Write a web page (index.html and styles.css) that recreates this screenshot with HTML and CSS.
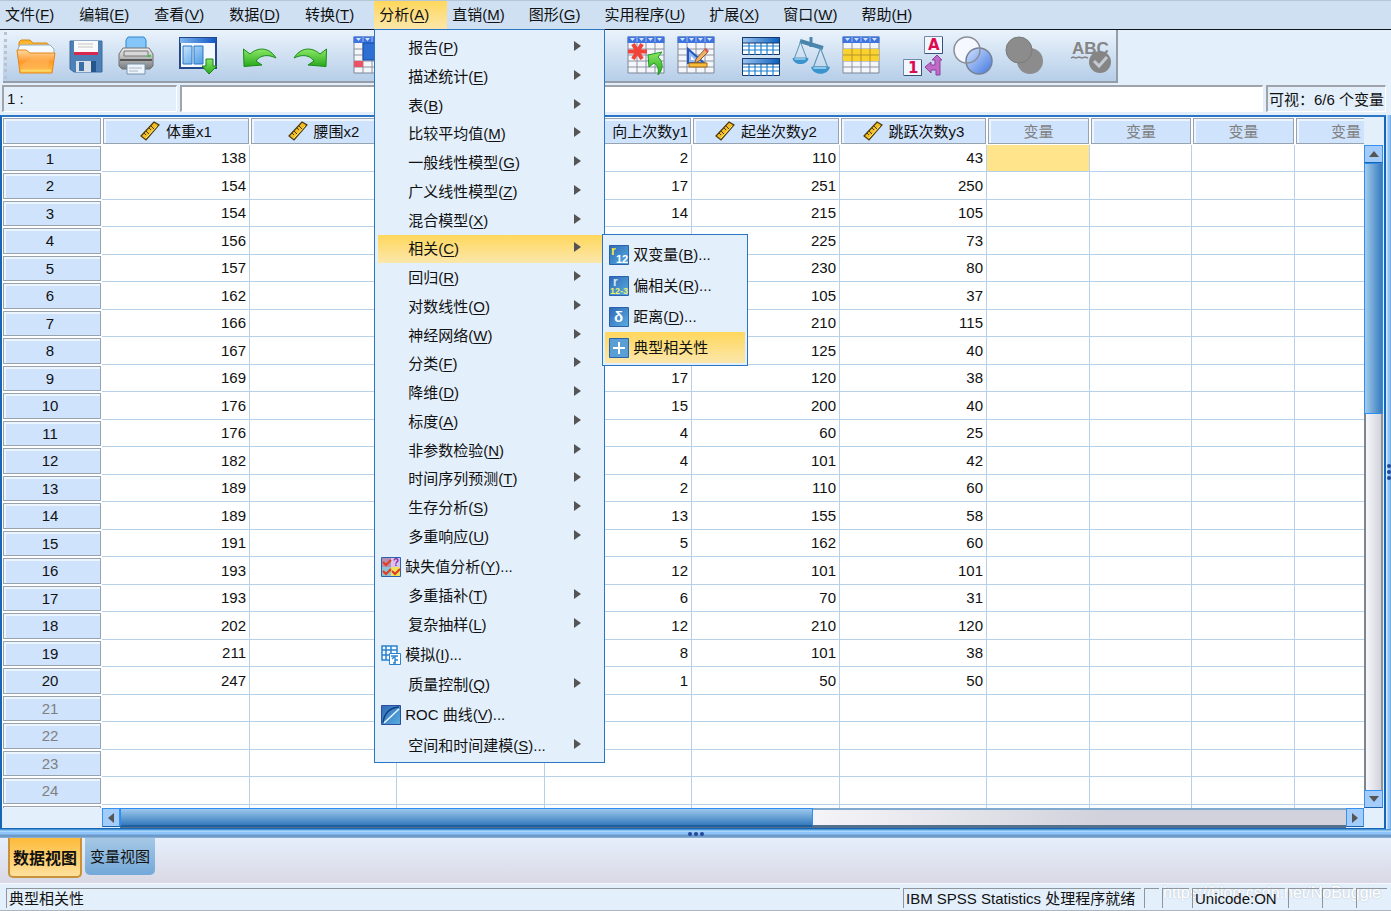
FILE: index.html
```html
<!DOCTYPE html>
<html lang="zh-CN">
<head>
<meta charset="utf-8">
<title>IBM SPSS Statistics</title>
<link rel="stylesheet" href="styles.css">
</head>
<body>
<svg class="defs" aria-hidden="true">
  <defs>
    <linearGradient id="blue" x1="0" y1="0" x2="1" y2="0"><stop offset="0" stop-color="#7db5ee"/><stop offset="1" stop-color="#1457c4"/></linearGradient>
    <linearGradient id="navy" x1="0" y1="0" x2="1" y2="0"><stop offset="0" stop-color="#9cc4ee"/><stop offset="1" stop-color="#0b5fc0"/></linearGradient>
    <linearGradient id="sky" x1="0" y1="0" x2="1" y2="1"><stop offset="0" stop-color="#c8e6fb"/><stop offset="1" stop-color="#4d9be6"/></linearGradient>
    <linearGradient id="tile" x1="0" y1="0" x2="1" y2="1"><stop offset="0" stop-color="#2f68b8"/><stop offset="1" stop-color="#59aee0"/></linearGradient>
    <linearGradient id="orange" x1="0" y1="0" x2="0" y2="1"><stop offset="0" stop-color="#ffd9a0"/><stop offset=".5" stop-color="#ff9a2e"/><stop offset="1" stop-color="#ffc23c"/></linearGradient>
    <linearGradient id="green" x1="0" y1="0" x2="0" y2="1"><stop offset="0" stop-color="#8be866"/><stop offset="1" stop-color="#27a81c"/></linearGradient>
    <linearGradient id="steel" x1="0" y1="0" x2="0" y2="1"><stop offset="0" stop-color="#f2f2f2"/><stop offset="1" stop-color="#77797c"/></linearGradient>
    <linearGradient id="ball" x1="0" y1="0" x2="1" y2="1"><stop offset="0" stop-color="#d5e3ff"/><stop offset="1" stop-color="#3f77e0"/></linearGradient>
    <symbol id="ruler" viewBox="0 0 20 20">
      <path d="M1 15 14 1l5 3L6 19z" fill="#f3bd22" stroke="#4a3a10" stroke-width="1.200"/>
      <path d="m4 12 2 2m0-4 3 3m0-6 2 2m0-4 3 3" stroke="#4a3a10" fill="none"/>
      <path d="m6 17 11-12" stroke="#ffe77a"/>
    </symbol>
    <symbol id="sheet" viewBox="0 0 40 40">
      <path d="M2 1h36v36H2z" fill="#f4f6fa" stroke="#7c8799"/>
      <path d="M2 13h36M2 19h36M2 25h36M2 31h36M11 6v31M20 6v31M29 6v31" stroke="#8a92a0" fill="none"/>
      <path d="M1.500.5h37V7h-37z" fill="#3f74de"/>
      <path d="M4 2h5L6.500 5zM13 2h5l-2.500 3zM22 2h5l-2.500 3zM31 2h5l-2.500 3z" fill="#d7e6ff"/>
      <path d="M11 1v5M20 1v5M29 1v5" stroke="#9dbcf2"/>
    </symbol>
    <symbol id="undo" viewBox="0 0 40 40">
      <path d="M3.500 13 4 30.500l18-1.500-6-4c4-6 12-7 20-3C30 12 19 10 10 18z" fill="url(#green)" stroke="#178b1b"/>
    </symbol>
    <symbol id="pan" viewBox="0 0 16 24">
      <path d="M8 1 2 17h12z" fill="none" stroke="#5a93b4"/>
      <path d="M0 17h16c-1 8-15 8-16 0z" fill="#3a93cf"/><path d="M2 18h11" stroke="#c9efff"/>
    </symbol>
    <symbol id="minitable" viewBox="0 0 38 18">
      <path d="M.5.5h37v17H.5z" fill="#fff" stroke="#15396f"/>
      <path d="M1 9h36M1 13h36M7 6v12M13 6v12M19 6v12M25 6v12M31 6v12" stroke="#1b7fd0" stroke-width="1.200"/>
      <path d="M.5.5h37V6H.5z" fill="url(#navy)" stroke="#15396f"/>
    </symbol>
  </defs>
</svg>

<nav class="menubar">
  <button>文件(<u>F</u>)</button>
  <button>编辑(<u>E</u>)</button>
  <button>查看(<u>V</u>)</button>
  <button>数据(<u>D</u>)</button>
  <button>转换(<u>T</u>)</button>
  <div class="menu-holder">
    <button class="open">分析(<u>A</u>)</button>
    <ul class="menu">
      <li><button class="more">报告(<u>P</u>)</button></li>
      <li><button class="more">描述统计(<u>E</u>)</button></li>
      <li><button class="more">表(<u>B</u>)</button></li>
      <li><button class="more">比较平均值(<u>M</u>)</button></li>
      <li><button class="more">一般线性模型(<u>G</u>)</button></li>
      <li><button class="more">广义线性模型(<u>Z</u>)</button></li>
      <li><button class="more">混合模型(<u>X</u>)</button></li>
      <li><button class="more lit">相关(<u>C</u>)</button>
        <ul class="submenu">
          <li><button><svg viewBox="0 0 20 20"><path d="M.5.5h19v19H.5z" fill="url(#tile)" stroke="#2c62ad"/><text x="2" y="10" class="t-r yellow">r</text><text x="7" y="18" class="t-num">12</text></svg>双变量(<u>B</u>)...</button></li>
          <li><button><svg viewBox="0 0 20 20"><path d="M.5.5h19v19H.5z" fill="url(#tile)" stroke="#2c62ad"/><text x="4" y="10" class="t-r">r</text><text x="1" y="18" class="t-small">12-3</text></svg>偏相关(<u>R</u>)...</button></li>
          <li><button><svg viewBox="0 0 20 20"><path d="M.5.5h19v19H.5z" fill="url(#tile)" stroke="#2c62ad"/><text x="5" y="15" class="t-delta">δ</text></svg>距离(<u>D</u>)...</button></li>
          <li><button class="lit"><svg viewBox="0 0 20 20"><path d="M.5.5h19v19H.5z" fill="#5a9ed6" stroke="#2c62ad"/><path d="M4 10h12M10 4v12" stroke="#fff" stroke-width="2"/></svg>典型相关性</button></li>
        </ul>
      </li>
      <li><button class="more">回归(<u>R</u>)</button></li>
      <li><button class="more">对数线性(<u>O</u>)</button></li>
      <li><button class="more">神经网络(<u>W</u>)</button></li>
      <li><button class="more">分类(<u>F</u>)</button></li>
      <li><button class="more">降维(<u>D</u>)</button></li>
      <li><button class="more">标度(<u>A</u>)</button></li>
      <li><button class="more">非参数检验(<u>N</u>)</button></li>
      <li><button class="more">时间序列预测(<u>T</u>)</button></li>
      <li><button class="more">生存分析(<u>S</u>)</button></li>
      <li><button class="more">多重响应(<u>U</u>)</button></li>
      <li class="pic"><button><svg viewBox="0 0 20 20"><path d="M.5.5h19v19H.5z" fill="#e8a45c" stroke="#2c62ad"/><path d="M1 1h9v9H1z" fill="#b58fb0"/><path d="M10 1h9v9h-9z" fill="#d8c4ee"/><path d="M1 10h9v9H1z" fill="#8ec1d6"/><path d="M10 10h9v9h-9z" fill="#efe25a"/><path d="m2 5 3 3 5-5M2 14l3 3 5-5m1 2 3 3 5-5" fill="none" stroke="#e23a1c" stroke-width="2"/><text x="12" y="9" class="t-q">?</text></svg>缺失值分析(<u>Y</u>)...</button></li>
      <li><button class="more">多重插补(<u>T</u>)</button></li>
      <li><button class="more">复杂抽样(<u>L</u>)</button></li>
      <li class="pic"><button><svg viewBox="0 0 20 20"><path d="M1 1h15v14H1zM1 5h15M1 10h15M5 1v14M10 1v14" fill="#f4faff" stroke="#2b83cf" stroke-width="1.500"/><path d="M8.500 8.500h11v11h-11z" fill="#fff" stroke="#2b83cf"/><path d="M10 11h7m-6 3 2-2m1-1v7m-2 0h3m-1-3h3" stroke="#2b83cf" stroke-width="1.400" fill="none"/></svg>模拟(<u>I</u>)...</button></li>
      <li><button class="more">质量控制(<u>Q</u>)</button></li>
      <li class="pic"><button><svg viewBox="0 0 20 20"><path d="M.5.5h19v19H.5z" fill="url(#tile)" stroke="#2c4f9d"/><path d="M2 18C3 8 8 3 18 2" fill="none" stroke="#123f80" stroke-width="1.500"/><path d="M3 18 18 4" stroke="#e9f6ff" stroke-width="1.500"/></svg>ROC 曲线(<u>V</u>)...</button></li>
      <li class="pic"><button class="more">空间和时间建模(<u>S</u>)...</button></li>
    </ul>
  </div>
  <button>直销(<u>M</u>)</button>
  <button>图形(<u>G</u>)</button>
  <button>实用程序(<u>U</u>)</button>
  <button>扩展(<u>X</u>)</button>
  <button>窗口(<u>W</u>)</button>
  <button>帮助(<u>H</u>)</button>
</nav>

<div class="toolbar-row">
  <div class="toolbar">
    <div class="group">
      <button aria-label="打开"><svg viewBox="0 0 40 40"><path d="M3 10V6l2-2h9l3 3h14l3 3v18H3z" fill="#ffb52c" stroke="#d98a1a"/><path d="M2 13 4 9h30l4 4v9H2z" fill="#f4faff" stroke="#8fb0cf"/><path d="M1 14h9l4 3h25l-3 20H4z" fill="url(#orange)" stroke="#e5851c"/><path d="M5 31c4-8 16-11 29-11l-2 13H6z" fill="#ffb65c" opacity=".6"/><path d="M5 34.500h30" stroke="#ffd86a" stroke-width="2"/></svg></button>
      <button aria-label="保存"><svg viewBox="0 0 40 40"><path d="M4 5h32v31H8l-4-3z" fill="#4c80b7" stroke="#3d6a9d"/><path d="M8 5h24v14H8z" fill="#fafafa"/><path d="M12 8h15M12 11h15" stroke="#c4c4c4"/><path d="M8 16h24v3H8z" fill="#d8284d"/><path d="M10 25h20v11H10z" fill="#d9e0e8"/><path d="M25 25h5v11h-5z" fill="#24558d"/><path d="M13 26h5v9h-5z" fill="#3a6ea8"/></svg></button>
      <button aria-label="打印"><svg viewBox="0 0 40 40"><path d="M10 15V4l2-3h16l2 3v11z" fill="#84c6f9" stroke="#2f87cc"/><path d="M7 12h26l4 6v12l-3 3H6l-3-3V18z" fill="url(#steel)" stroke="#727272"/><path d="M8 15h24v5H8z" fill="#d8d8d8" stroke="#777"/><path d="M4 24h32" stroke="#555" stroke-width="2"/><path d="M31 20h4" stroke="#48c24a" stroke-width="2"/><path d="M11 28h18v10H11z" fill="#eef5fc" stroke="#7492ad"/><path d="M13 32h13M13 35h9" stroke="#a6b5c4"/></svg></button>
    </div>
    <div class="group">
      <button aria-label="调用对话框"><svg viewBox="0 0 40 40"><path d="M2 2h36v30H2z" fill="#f3f9ff" stroke="#24488a" stroke-width="2"/><path d="M2 2h36v5H2z" fill="url(#blue)"/><path d="M5 10h9v18H5zM16 10h9v18h-9z" fill="url(#sky)" stroke="#2b77c5"/><path d="M28 23h7v7h4l-8 8-7-8h4z" fill="url(#green)" stroke="#17811c"/></svg></button>
    </div>
    <div class="group">
      <button aria-label="撤销"><svg><use href="#undo"/></svg></button>
      <button aria-label="重做"><svg class="mirror"><use href="#undo"/></svg></button>
    </div>
    <div class="group">
      <button aria-label="转到个案"><svg viewBox="0 0 40 40"><use href="#sheet"/><path d="M2 25h9v6H2z" fill="#ec5164"/><path d="M11 7h20v17H11z" fill="#2d6fd2" stroke="#1a4da3"/></svg></button>
      <button aria-label="转到变量"><svg><use href="#sheet"/></svg></button>
      <button aria-label="变量"><svg><use href="#sheet"/></svg></button>
    </div>
    <div class="group">
      <button aria-label="运行描述统计"><svg><use href="#sheet"/></svg></button>
      <button aria-label="查找"><svg><use href="#sheet"/></svg></button>
    </div>
    <div class="group">
      <button aria-label="插入个案"><svg viewBox="0 0 40 40"><use href="#sheet"/><path d="m7 8 9 15M16 8 7 23M2 15.500h19" stroke="#f0433a" stroke-width="4"/><path d="m22 19 14-3-4 5c6 5 5 13 0 18 1-6 0-9-4-12l-5 4z" fill="url(#green)" stroke="#1d9a20"/></svg></button>
      <button aria-label="插入变量"><svg viewBox="0 0 40 40"><use href="#sheet"/><path d="M12 13v14h16z" fill="#8fb8f5" stroke="#2456c0" stroke-width="2"/><path d="m15 20 4 4h-4z" fill="#fff"/><path d="m20 23 9-10 3 3-9 9-4 2z" fill="#edb267" stroke="#8e5a2c"/><path d="m28 13 2-1 3 3-2 2z" fill="#d95a58"/><path d="M13 27h18v4H13z" fill="#f7bd3b" stroke="#a86a12"/></svg></button>
    </div>
    <div class="group wide">
      <button aria-label="拆分文件"><svg viewBox="0 0 40 40"><use href="#minitable" x="1" y="1" width="38" height="18"/><use href="#minitable" x="1" y="22" width="38" height="18"/></svg></button>
      <button aria-label="个案加权"><svg viewBox="0 0 40 40"><path d="m9 5 23 7" stroke="#4a86ac" stroke-width="4"/><path d="M20 1v10" stroke="#4a86ac" stroke-width="3"/><use href="#pan" x="1" y="5" width="17" height="24"/><use href="#pan" x="20" y="11" width="19" height="28"/></svg></button>
      <button aria-label="选择个案"><svg viewBox="0 0 40 40"><use href="#sheet"/><path d="M2 13h36v12H2z" fill="#f9d22d"/><path d="M2 19h36M11 13v12M20 13v12M29 13v12" stroke="#b5952d"/></svg></button>
    </div>
    <div class="group">
      <button aria-label="值标签"><svg viewBox="0 0 40 40"><path d="M21.500.5h18v17h-18zM.5 23.500h18v16H.5z" fill="#f1f7ff" stroke="#7388ab"/><path d="M22 17.500h17.500V1M1 39.500h17.500V24" fill="none" stroke="#3d5277"/><text x="25" y="14" class="t-tag">A</text><text x="5" y="37" class="t-tag">1</text><path d="m22 31 6-5v3h4v-5h-3l5-5 5 5h-2v15h-4v-5h-5v3z" fill="#bf6cc9" stroke="#8f3e9c"/></svg></button>
      <button aria-label="使用变量集"><svg viewBox="0 0 40 40"><circle cx="14" cy="14" r="13" fill="#f5f8ff"/><circle cx="26" cy="25" r="13" fill="url(#ball)" stroke="#778194" stroke-width="1.500"/><circle cx="14" cy="14" r="13" fill="none" stroke="#8b8f98" stroke-width="1.500"/></svg></button>
      <button aria-label="显示所有变量"><svg viewBox="0 0 40 40"><circle cx="16" cy="14" r="13" fill="#8c8c8c"/><circle cx="27" cy="25" r="13" fill="#8c8c8c"/><circle cx="16" cy="14" r="13" fill="none" stroke="#7b7b7b"/></svg></button>
    </div>
    <div class="group last">
      <button aria-label="拼写检查"><svg viewBox="0 0 40 40"><text x="1" y="18" class="t-abc">ABC</text><path d="m0 22 2-1 3 1 3-1 3 1 3-1 3 1" fill="none" stroke="#858585" stroke-width="1.500"/><circle cx="29" cy="26" r="11" fill="#858585"/><path d="m23 25 5 5 8-9" fill="none" stroke="#c5cad0" stroke-width="3"/></svg></button>
    </div>
  </div>
</div>

<div class="cellbar">
  <input class="cellname" aria-label="单元格" value="1 :" readonly>
  <input class="cellvalue" aria-label="单元格值">
  <output class="visible">可视：6/6 个变量</output>
</div>

<div class="workspace">
  <main class="editor">
    <div class="grid">
      <table>
        <colgroup><col class="c-head"><col class="c-a"><col class="c-b"><col class="c-a"><col class="c-b"><col class="c-a"><col class="c-b"><col class="c-d"><col class="c-c"><col class="c-d"><col class="c-c"></colgroup>
        <thead>
          <tr><td class="corner"></td>
            <th><span><svg><use href="#ruler"/></svg>体重x1</span></th>
            <th><span><svg><use href="#ruler"/></svg>腰围x2</span></th>
            <th></th>
            <th class="end"><span>向上次数y1</span></th>
            <th><span><svg><use href="#ruler"/></svg>起坐次数y2</span></th>
            <th><span><svg><use href="#ruler"/></svg>跳跃次数y3</span></th>
            <th class="blank">变量</th><th class="blank">变量</th><th class="blank">变量</th><th class="blank">变量</th></tr>
        </thead>
        <tbody>
          <tr><th>1<td>138<td><td><td>2<td>110<td>43<td class="picked"><td><td><td></tr>
          <tr><th>2<td>154<td><td><td>17<td>251<td>250<td><td><td><td></tr>
          <tr><th>3<td>154<td><td><td>14<td>215<td>105<td><td><td><td></tr>
          <tr><th>4<td>156<td><td><td><td>225<td>73<td><td><td><td></tr>
          <tr><th>5<td>157<td><td><td><td>230<td>80<td><td><td><td></tr>
          <tr><th>6<td>162<td><td><td><td>105<td>37<td><td><td><td></tr>
          <tr><th>7<td>166<td><td><td><td>210<td>115<td><td><td><td></tr>
          <tr><th>8<td>167<td><td><td><td>125<td>40<td><td><td><td></tr>
          <tr><th>9<td>169<td><td><td>17<td>120<td>38<td><td><td><td></tr>
          <tr><th>10<td>176<td><td><td>15<td>200<td>40<td><td><td><td></tr>
          <tr><th>11<td>176<td><td><td>4<td>60<td>25<td><td><td><td></tr>
          <tr><th>12<td>182<td><td><td>4<td>101<td>42<td><td><td><td></tr>
          <tr><th>13<td>189<td><td><td>2<td>110<td>60<td><td><td><td></tr>
          <tr><th>14<td>189<td><td><td>13<td>155<td>58<td><td><td><td></tr>
          <tr><th>15<td>191<td><td><td>5<td>162<td>60<td><td><td><td></tr>
          <tr><th>16<td>193<td><td><td>12<td>101<td>101<td><td><td><td></tr>
          <tr><th>17<td>193<td><td><td>6<td>70<td>31<td><td><td><td></tr>
          <tr><th>18<td>202<td><td><td>12<td>210<td>120<td><td><td><td></tr>
          <tr><th>19<td>211<td><td><td>8<td>101<td>38<td><td><td><td></tr>
          <tr><th>20<td>247<td><td><td>1<td>50<td>50<td><td><td><td></tr>
          <tr class="unused"><th>21<td><td><td><td><td><td><td><td><td><td></tr>
          <tr class="unused"><th>22<td><td><td><td><td><td><td><td><td><td></tr>
          <tr class="unused"><th>23<td><td><td><td><td><td><td><td><td><td></tr>
          <tr class="unused"><th>24<td><td><td><td><td><td><td><td><td><td></tr>
          <tr class="unused"><th><td><td><td><td><td><td><td><td><td><td></tr>
        </tbody>
      </table>
    </div>
    <div class="vscroll">
      <button class="arrow up" aria-label="向上滚动"></button>
      <div class="track"><div class="thumb"></div></div>
      <button class="arrow down" aria-label="向下滚动"></button>
    </div>
    <div class="hscroll">
      <button class="arrow left" aria-label="向左滚动"></button>
      <div class="track"><div class="thumb"></div></div>
      <button class="arrow right" aria-label="向右滚动"></button>
    </div>
  </main>
  <div class="side-split"><i></i><i></i><i></i></div>
</div>
<div class="bottom-split"><i></i><i></i><i></i></div>

<div class="tabs">
  <button class="tab active">数据视图</button>
  <button class="tab">变量视图</button>
</div>

<footer class="status">
  <div class="watermark">https://blog.csdn.net/NoBuggie</div>
  <span class="message">典型相关性</span>
  <span class="server">IBM SPSS Statistics 处理程序就绪</span>
  <span class="s-tiny"></span>
  <span class="s-small"></span>
  <span class="unicode">Unicode:ON</span>
  <span class="s-mid"></span>
  <span class="s-mid"></span>
  <span class="s-mid"></span>
</footer>
</body>
</html>
```
FILE: styles.css
```css
* { box-sizing: border-box; }

body {
  margin: 0;
  height: 100vh;
  display: flex;
  flex-direction: column;
  overflow: hidden;
  background: #e3effb;
  color: #111;
  font: 15px/20px "Liberation Sans", "Noto Sans CJK SC", sans-serif;
}

button, input {
  font: inherit;
  color: inherit;
  border: 0;
  padding: 0;
  margin: 0;
  background: none;
  border-radius: 0;
}

ul { list-style: none; margin: 0; padding: 0; }
u { text-underline-offset: 2px; }
.defs { position: absolute; width: 0; height: 0; }

/* Menu bar */
.menubar {
  display: flex;
  height: 30px;
  flex: none;
  background: #cee0f1;
  border-top: 1px solid #b5c6d6;
  border-bottom: 1px solid #10151c;
}
.menubar > button, .menu-holder > button {
  height: 28px;
  padding: 0 20px 0 5px;
  white-space: nowrap;
}
.menu-holder > .open {
  padding-right: 18px;
  background: linear-gradient(#ffd75c, #fbe7ab);
}
.menu-holder ~ button { padding-right: 19px; }
.menu-holder { position: relative; }

.menu, .submenu {
  position: absolute;
  z-index: 5;
  background: #e3effb;
  border: 1px solid #2a76c4;
}
.menu {
  top: 28px;
  left: 0;
  width: 231px;
  padding: 3px 0 1px 3px;
}
.menu > li { position: relative; height: 29px; }
.menu > li:nth-child(4n) { height: 28px; }
.menu > li.pic { height: 31px; }
.menu button {
  display: flex;
  align-items: center;
  width: 100%;
  height: 100%;
  padding-left: 30px;
  white-space: pre;
}
.menu .more::after {
  content: "";
  margin: 0 23px 4px auto;
  border: solid transparent;
  border-width: 5px 0 5px 7px;
  border-left-color: #555;
}
.menu .lit { background: linear-gradient(#ffd75c, #fbe7ab); }
.menu svg { width: 20px; height: 20px; flex: none; margin-right: 4px; overflow: visible; }
.menu .pic button:not(.more) { padding-left: 3px; }
.submenu {
  top: -1px;
  left: 224px;
  width: 146px;
  padding: 4px 2px 2px 2px;
}
.submenu li { height: 31px; }
.menu .submenu button { padding-left: 4px; }

.t-r { font: bold 12px "Liberation Sans", sans-serif; fill: #dfe8f2; }
.yellow { fill: #f5ee2a; }
.t-num { font: bold 11px "Liberation Sans", sans-serif; fill: #fff; }
.t-small { font: bold 9px "Liberation Sans", sans-serif; fill: #eef06a; }
.t-delta { font: bold 15px "Liberation Sans", sans-serif; fill: #fff; }
.t-q { font: bold 10px "Liberation Sans", sans-serif; fill: #8d2ba6; }
.t-tag { font: bold 15px "DejaVu Sans", sans-serif; fill: #dd0a50; }
.t-abc { font: bold 17px "Liberation Sans", sans-serif; fill: #858585; }

/* Toolbar */
.toolbar-row { flex: none; display: flex; padding-left: 3px; }
.toolbar {
  display: flex;
  align-items: center;
  gap: 12px;
  height: 53px;
  padding-left: 8px;
  background: linear-gradient(#eaf3fc, #b6cee8);
  border-right: 2px solid #949da8;
  border-bottom: 2px solid #949da8;
  position: relative;
}
.toolbar::before {
  content: "";
  position: absolute;
  inset: 2px auto 2px 1px;
  border-left: 3px dotted #b9c2cd;
}
.group { display: flex; }
.group.wide { margin-left: 3px; }
.group.last { margin-left: 6px; }
.group button { width: 50px; height: 44px; display: grid; place-items: center; }
.group svg { width: 40px; height: 40px; overflow: visible; }
.mirror { transform: scaleX(-1); }

/* Cell reference bar */
.cellbar {
  flex: none;
  display: flex;
  gap: 3px;
  height: 32px;
  padding: 2px 5px 3px 2px;
}
.cellbar > * {
  border: 1px solid #fff;
  border-top: 2px solid #a0a4aa;
  border-left: 2px solid #a0a4aa;
  min-width: 0;
}
.cellname { width: 175px; padding-left: 3px; }
.cellvalue { flex: 1; background: #fff; }
.visible { padding: 3px 1px 0; white-space: nowrap; }

/* Data editor */
.workspace { flex: 1; min-height: 0; display: flex; }
.editor {
  flex: 1;
  min-width: 0;
  display: grid;
  grid-template: minmax(0, 1fr) 20px / minmax(0, 1fr) 19px;
  padding-right: 1px;
  border: 1px solid #1766b5;
  border-top: 2px solid #2a76c4;
  border-left-width: 2px;
  border-right-width: 2px;
}
.grid { overflow: hidden; background: #fff; }
.grid table {
  width: 1395px;
  table-layout: fixed;
  border-collapse: separate;
  border-spacing: 0;
}
.c-head { width: 100px; }
.c-a { width: 148px; }
.c-b { width: 147px; }
.c-c { width: 102px; }
.c-d { width: 103px; }
.grid th, .grid td { height: 27px; padding: 0; line-height: 20px; }
.grid tr:nth-child(even) > * { height: 28px; }
.grid thead tr > * { height: 28px; padding-top: 2px; }
.grid th, .corner {
  font-weight: normal;
  background: #cfe3fc;
  border: 1px solid #fff;
  box-shadow: inset 0 0 0 1px #98a3b0, inset 2px 2px 0 1px #edf5ff;
}
.grid tbody th { padding-right: 4px; }
.grid tbody td {
  text-align: right;
  padding-right: 3px;
  border-right: 1px solid #b7d1ea;
  border-bottom: 1px solid #b7d1ea;
}
.grid th span { display: flex; align-items: center; justify-content: center; }
.grid th.end span { justify-content: flex-end; padding-right: 3px; }
.grid th svg { width: 20px; height: 20px; margin: -2px 6px 0 0; }
.grid .blank, .unused th { color: #808080; }
.grid td.picked { background: #ffe48b; }

/* Scroll bars */
.vscroll { display: flex; flex-direction: column; padding-top: 28px; }
.hscroll { display: flex; margin-left: 100px; }
.track { flex: 1; }
.vscroll .track {
  border-left: 2px solid #7f858d;
  border-right: 2px solid #8f959d;
  background: linear-gradient(90deg, #f7f7fa, #d2d2dc);
}
.hscroll .track {
  border-top: 2px solid #7fa9cf;
  border-bottom: 3px solid #55708c;
  background: linear-gradient(90deg, #f7f7fa 55%, #d2d2dc 80%);
}
.thumb { background: linear-gradient(#9cc8ed, #347bbd); }
.vscroll .thumb {
  height: 40%;
  margin: 0 -2px;
  background: linear-gradient(90deg, #a3cbec, #347bbd);
  border: 1px solid #2d8df0;
}
.hscroll .thumb {
  width: 56.5%;
  height: 19px;
  margin-top: -2px;
  border: 1px solid #2d8df0;
  border-bottom: 2px solid #1f5f9e;
}
.arrow {
  flex: none;
  width: 18px;
  height: 19px;
  display: grid;
  place-items: center;
  background: #a4ccfb;
  border: 1px solid #3592f0;
  border-bottom-color: #1a62ae;
}
.vscroll .arrow { width: 100%; height: 18px; }
.arrow::after { content: ""; border: 5px solid transparent; }
.up::after { border-top-width: 0; border-bottom: 6px solid #555; }
.down::after { border-bottom-width: 0; border-top: 6px solid #555; }
.left::after { border-left-width: 0; border-right: 6px solid #555; }
.right::after { border-right-width: 0; border-left: 6px solid #555; }

/* Split bars */
.side-split {
  width: 5px;
  display: flex;
  flex-direction: column;
  align-items: flex-end;
  justify-content: center;
  gap: 2px;
  background: linear-gradient(90deg, #d5ecff 1px, #8fc4fb 2px, #8fc4fb 4px, #5f95cc 5px);
}
.bottom-split {
  flex: none;
  height: 9px;
  display: flex;
  align-items: center;
  justify-content: center;
  gap: 2px;
  background: linear-gradient(#4a94d8 1px, #c4ebff 2px, #8fc4fb 3px, #8fc4fb 5px, #6b9ac8 6px, #6b9ac8 8px, #a9c4e0 9px);
}
.side-split i, .bottom-split i {
  width: 4px;
  height: 4px;
  border-radius: 2px;
  background: #23499b;
}

/* View tabs */
.tabs {
  flex: none;
  display: flex;
  align-items: flex-start;
  gap: 3px;
  height: 45px;
  padding-left: 8px;
  background: linear-gradient(#e6effc, #d9d8e4);
}
.tab {
  height: 37px;
  padding: 0 5px;
  border-radius: 0 0 5px 5px;
  background: linear-gradient(#a6c8e5, #73a8d8);
}
.tab.active {
  height: 40px;
  padding: 3px 3px 0;
  border: 2px solid #c79238;
  border-top: 0;
  background: linear-gradient(#fdbb3b, #fee09c);
  font-size: 16px;
  font-weight: bold;
}

/* Status bar */
.status {
  flex: none;
  position: relative;
  display: flex;
  gap: 3px;
  height: 28px;
  padding: 4px 4px 2px 6px;
  border-top: 1px solid #f6f9fd;
  border-bottom: 1px solid #aeb4bc;
}
.status span {
  position: relative;
  border-top: 1px solid #8e959d;
  border-left: 1px solid #8e959d;
  padding-left: 2px;
  white-space: nowrap;
}
.message { flex: 1; }
.server { width: 238px; }
.s-tiny { width: 15px; }
.s-small { width: 27px; }
.unicode { width: 93px; }
.s-mid { width: 31px; }
.watermark {
  position: absolute;
  right: 10px;
  bottom: 7px;
  font-size: 16px;
  color: #fff;
  text-shadow: 0 0 2px #b4bfcb;
}
```
